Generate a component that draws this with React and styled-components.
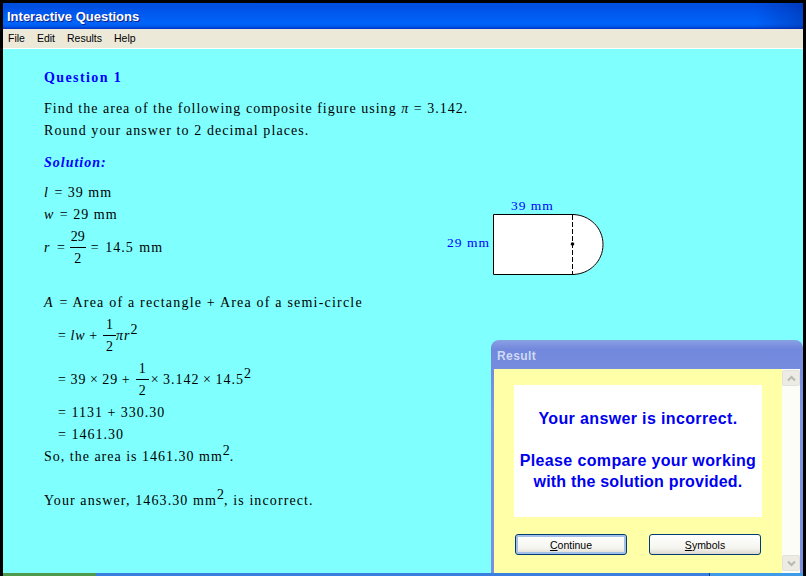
import React from "react";
import styled, { createGlobalStyle } from "styled-components";

const Global = createGlobalStyle`
  html, body { margin: 0; padding: 0; background: #000; }
  body { width: 806px; height: 576px; overflow: hidden; }
`;

const Screen = styled.div`
  position: relative;
  width: 806px;
  height: 576px;
  box-sizing: border-box;
  padding: 3px 3px 0;
  background: #000;
  display: flex;
  flex-direction: column;
  overflow: hidden;
`;

const TitleBar = styled.div`
  height: 26px;
  flex: none;
  box-sizing: border-box;
  padding: 0 0 0 4px;
  display: flex;
  align-items: center;
  color: #fff;
  font: bold 13px "Liberation Sans", Arial, sans-serif;
  text-shadow: 1px 1px 0 #0f1f8a;
  background:
    linear-gradient(90deg, rgba(0, 30, 140, 0) 94%, rgba(0, 30, 140, 0.4) 100%),
    linear-gradient(180deg, #0052e0 0%, #004ee0 12%, #0058ee 35%, #0064fa 80%, #0058ea 90%, #0334c4 100%);
`;

const MenuBar = styled.div`
  height: 20px;
  flex: none;
  box-sizing: border-box;
  padding: 0 0 2px 5px;
  display: flex;
  align-items: center;
  gap: 12px;
  background: #ece9d8;
  border-bottom: 1px solid #fff;
  font: 10.5px "Liberation Sans", Tahoma, sans-serif;
  color: #000;
`;

const Content = styled.div`
  flex: 1;
  min-height: 0;
  box-sizing: border-box;
  padding: 18px 0 0 41px;
  background: #80ffff;
  font: 14px/22px "Liberation Serif", "Times New Roman", serif;
  letter-spacing: 1px;
  color: #000;
`;

const Heading = styled.div`
  font-weight: bold;
  font-style: ${(p) => (p.$italic ? "italic" : "normal")};
  color: #0000ff;
  font-size: 14px;
  height: 22px;
  letter-spacing: ${(p) => (p.$italic ? 1 : 1.4)}px;
  margin-top: ${(p) => p.$top || 0}px;
  margin-bottom: ${(p) => p.$gap}px;
`;

const Line = styled.div`
  height: 22px;
  white-space: nowrap;
  margin-left: ${(p) => (p.$indent ? 14 : 0)}px;
  margin-top: ${(p) => p.$top || 0}px;
  letter-spacing: ${(p) => p.$track || 1}px;
  word-spacing: ${(p) => p.$words || 0}px;
  display: flex;
  align-items: center;
`;

const TallLine = styled(Line)`
  height: 44px;
`;

const Var = styled.i`
  margin-right: 1px;
`;

const Frac = styled.span`
  display: inline-flex;
  flex-direction: column;
  align-items: center;
  margin: 0 ${(p) => p.$right ?? 1}px 0 ${(p) => p.$left ?? 1}px;
  line-height: 22px;
  letter-spacing: 0;
`;

const Num = styled.span`
  border-bottom: 1px solid #000;
  padding: 0 ${(p) => (p.$wide ? 1 : 3)}px;
  line-height: 21px;
`;

const Sup = styled.sup`
  font-size: 14px;
  line-height: 0;
  vertical-align: 6px;
  letter-spacing: 0;
`;

const Inline = styled.span`
  white-space: pre;
`;

const TopBlock = styled.div`
  height: 88px;
  display: flex;
  align-items: flex-start;
`;

const Values = styled.div`
  width: 402px;
  flex: none;
`;

const Figure = styled.div`
  margin: 17px 0 0 1px;
  display: grid;
  grid-template-columns: auto auto;
  grid-template-rows: 15px auto;
  column-gap: 3px;
  color: #0000ff;
  font-size: 13.5px;
  line-height: 16px;
`;

const TopLabel = styled.div`
  grid-column: 2;
  padding-left: 18px;
  margin-top: -1px;
`;

const SideLabel = styled.div`
  grid-column: 1;
  align-self: center;
  margin-top: -4px;
`;

const Result = styled.div`
  position: absolute;
  left: 491px;
  top: 340px;
  width: 312px;
  height: 233px;
  box-sizing: border-box;
  display: flex;
  flex-direction: column;
  padding: 0 3px;
  border-radius: 8px 8px 0 0;
  background: linear-gradient(180deg, #8aa0e4 0%, #7288dc 4%, #7c96e2 30%, #7a90dc 100%);
`;

const ResultTitle = styled.div`
  height: 29px;
  flex: none;
  display: flex;
  align-items: center;
  padding: 3px 0 0 3px;
  box-sizing: border-box;
  color: #cfd9f2;
  font: bold 12px "Liberation Sans", Tahoma, sans-serif;
  letter-spacing: 0.4px;
`;

const ResultBody = styled.div`
  flex: 1;
  min-height: 0;
  display: flex;
  background: #ffffa8;
`;

const ResultMain = styled.div`
  flex: 1;
  box-sizing: border-box;
  padding: 16px 0 0 20px;
`;

const Message = styled.div`
  width: 248px;
  height: 132px;
  box-sizing: border-box;
  padding-top: 23px;
  background: #fff;
  color: #0000f0;
  text-align: center;
  font: bold 16px/21px "Liberation Sans", Arial, sans-serif;
`;

const MessageLine = styled.div`
  letter-spacing: ${(p) => p.$track}px;
  margin-bottom: ${(p) => p.$gap || 0}px;
`;

const Buttons = styled.div`
  display: flex;
  gap: 22px;
  margin: 17px 0 0 1px;
`;

const Button = styled.button`
  width: 112px;
  height: 21px;
  box-sizing: border-box;
  padding: 0;
  border: 1px solid #003c74;
  border-radius: 3px;
  background: linear-gradient(180deg, #ffffff 0%, #f4f4ef 70%, #dcd8ce 100%);
  box-shadow: ${(p) => (p.$focus ? "inset 0 0 0 2px #a4bfe8" : "none")};
  font: 10.5px "Liberation Sans", Tahoma, sans-serif;
  color: #000;
  u { text-decoration: underline; }
`;

const ScrollTrack = styled.div`
  width: 18px;
  flex: none;
  background: #fdfdf8;
  display: flex;
  flex-direction: column;
  justify-content: space-between;
  padding-bottom: 2px;
`;

const ScrollBtn = styled.div`
  height: 16px;
  box-sizing: border-box;
  margin-top: 1px;
  border: 1px solid #e2e2da;
  border-radius: 2px;
  background: #ecebe4;
  display: flex;
  align-items: center;
  justify-content: center;
`;

const Taskbar = styled.div`
  height: 3px;
  flex: none;
  display: flex;
  background: #3a7ee0;
`;

const StartBtn = styled.div`
  width: 93px;
  background: #4f9a4c;
`;

const Tray = styled.div`
  margin-left: auto;
  width: 93px;
  border-left: 1px solid #103a90;
  background: #3f9be8;
`;

const Chevron = ({ up }) => (
  <svg width="9" height="7" viewBox="0 0 9 7">
    <path d={up ? "M1 5.5 L4.5 2 L8 5.5" : "M1 1.5 L4.5 5 L8 1.5"} fill="none" stroke="#b9b9b0" strokeWidth="2" />
  </svg>
);

const Shape = () => (
  <svg width="111" height="62" viewBox="0 0 111 62">
    <path d="M0.5 0.5 H80.5 A30 30 0 0 1 80.5 60.5 H0.5 Z" fill="#fff" stroke="none" />
    <path d="M80 0.5 H0.5 V60.5 H80" fill="none" stroke="#000" strokeWidth="1" />
    <path d="M80 0.5 C97 1 110 14 110 30.5 C110 47 97 60 80 60.5" fill="none" stroke="#000" strokeWidth="1" />
    <path d="M79.5 1 V60" fill="none" stroke="#000" strokeWidth="1" strokeDasharray="5 2" />
    <circle cx="79.5" cy="30" r="1.8" fill="#000" />
  </svg>
);

export default function App() {
  return (
    <>
      <Global />
      <Screen>
        <TitleBar>Interactive Questions</TitleBar>
        <MenuBar>
          <span>File</span>
          <span>Edit</span>
          <span>Results</span>
          <span>Help</span>
        </MenuBar>
        <Content>
          <Heading $gap={9}>Question 1</Heading>
          <Line $track={1.02}>
            <Inline>Find the area of the following composite figure using <i>π</i> = 3.142.</Inline>
          </Line>
          <Line $track={1.08}>Round your answer to 2 decimal places.</Line>
          <Heading $italic $gap={8} $top={10}>Solution:</Heading>
          <TopBlock>
            <Values>
              <Line><Inline><Var>l</Var> = 39 mm</Inline></Line>
              <Line><Inline><Var>w</Var> = 29 mm</Inline></Line>
              <TallLine $words={1}>
                <Inline><Var>r</Var> =</Inline>
                <Frac $left={4} $right={5}><Num $wide>29</Num><span>2</span></Frac>
                <Inline>= 14.5 mm</Inline>
              </TallLine>
            </Values>
            <Figure>
              <TopLabel>39 mm</TopLabel>
              <SideLabel>29 mm</SideLabel>
              <Shape />
            </Figure>
          </TopBlock>
          <Line $top={22} $track={1.2}><Inline><Var>A</Var> = Area of a rectangle + Area of a semi-circle</Inline></Line>
          <TallLine $indent $words={-1}>
            <Inline>= <i>lw</i> +</Inline>
            <Frac $left={5} $right={0}><Num>1</Num><span>2</span></Frac>
            <Inline><i>πr</i><Sup>2</Sup></Inline>
          </TallLine>
          <TallLine $indent $words={-1}>
            <Inline>= 39 × 29 +</Inline>
            <Frac $left={5} $right={2}><Num>1</Num><span>2</span></Frac>
            <Inline>× 3.142 × 14.5<Sup>2</Sup></Inline>
          </TallLine>
          <Line $indent>= 1131 + 330.30</Line>
          <Line $indent>= 1461.30</Line>
          <Line><Inline>So, the area is 1461.30 mm<Sup>2</Sup>.</Inline></Line>
          <Line $top={22} $track={1.1}><Inline>Your answer, 1463.30 mm<Sup>2</Sup>, is incorrect.</Inline></Line>
        </Content>
        <Taskbar><StartBtn /><Tray /></Taskbar>
        <Result>
          <ResultTitle>Result</ResultTitle>
          <ResultBody>
            <ResultMain>
              <Message>
                <MessageLine $track={0.36} $gap={21}>Your answer is incorrect.</MessageLine>
                <MessageLine $track={0.36}>Please compare your working</MessageLine>
                <MessageLine $track={0.2}>with the solution provided.</MessageLine>
              </Message>
              <Buttons>
                <Button $focus><u>C</u>ontinue</Button>
                <Button><u>S</u>ymbols</Button>
              </Buttons>
            </ResultMain>
            <ScrollTrack>
              <ScrollBtn><Chevron up /></ScrollBtn>
              <ScrollBtn><Chevron /></ScrollBtn>
            </ScrollTrack>
          </ResultBody>
        </Result>
      </Screen>
    </>
  );
}
